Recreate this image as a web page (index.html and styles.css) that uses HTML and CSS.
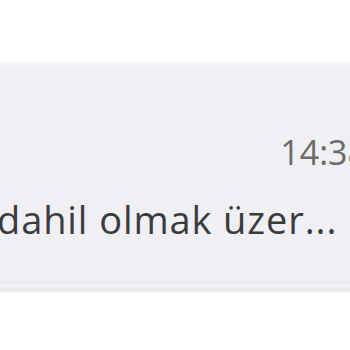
FILE: index.html
```html
<!DOCTYPE html>
<html lang="tr">
<head>
  <meta charset="UTF-8">
  <meta name="viewport" content="width=device-width, initial-scale=1.0">
  <title>Sohbetler</title>
  <link rel="stylesheet" href="styles.css">
</head>
<body>
  <div class="chat-list">
    <div class="chat-item">
      <div class="chat-meta">
        <span class="chat-time">14:38</span>
      </div>
      <div class="chat-preview">dahil olmak üzer...</div>
    </div>
  </div>
</body>
</html>
```

FILE: styles.css
```css
body {
  margin: 0;
  background: #ffffff;
  font-family: "Open Sans", "Noto Sans", sans-serif;
  overflow: hidden;
}

.chat-list {
  padding-top: 61px;
}

.chat-item {
  height: 232px;
  background: linear-gradient(to bottom,
    #fafbfb 0, #f0f0f4 7px,
    #f0f0f4 219px, #eaeaee 221px,
    #f2f2f5 224px, #f2f2f5 226px,
    #e8e8ec 229px, #fcfcfd 232px);
  padding-top: 69px;
  box-sizing: border-box;
}

.chat-meta {
  display: flex;
  justify-content: flex-end;
  margin-right: -17px;
}

.chat-time {
  font-size: 34px;
  line-height: 45px;
  color: #6b6b6b;
}

.chat-preview {
  margin-top: 20px;
  margin-left: -3px;
  font-size: 38px;
  line-height: 49px;
  letter-spacing: 0.9px;
  color: #3b3b3d;
  white-space: nowrap;
}
```
